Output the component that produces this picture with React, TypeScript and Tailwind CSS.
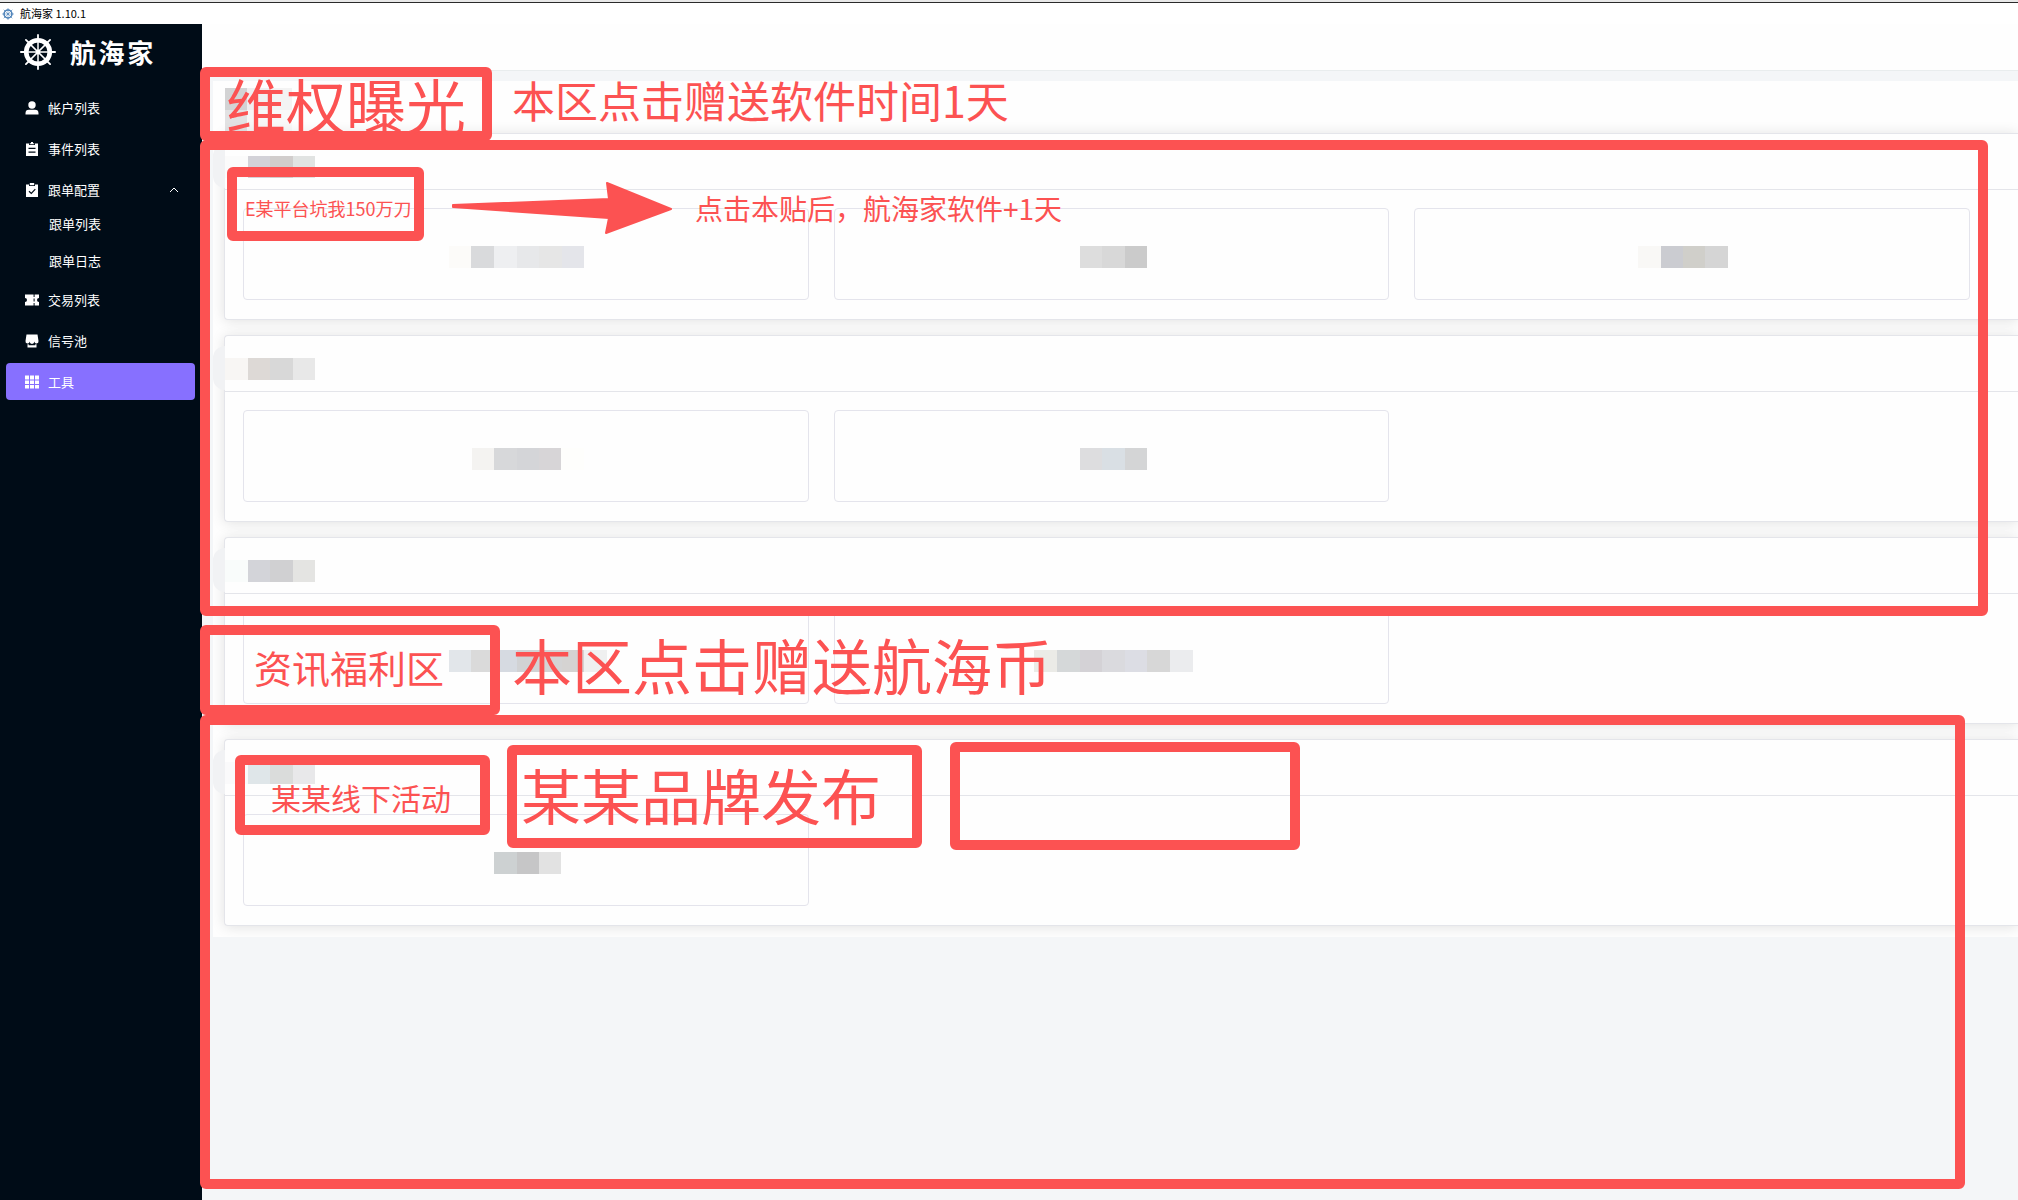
import type { ReactNode } from 'react'

function Helm({ className }: { className?: string }) {
  return (
    <svg viewBox="0 0 36 36" className={className} fill="none" stroke="currentColor" aria-hidden="true">
      <circle cx="18" cy="18" r="11.8" strokeWidth="4.6" />
      <circle cx="18" cy="18" r="2.4" fill="currentColor" stroke="none" />
      {[0, 45, 90, 135].map((a) => (
        <g key={a} transform={`rotate(${a} 18 18)`}>
          <path d="M18 4v28" strokeWidth="1.5" />
          <path d="M18 0.9v4M18 31.1v4" strokeWidth="1.8" strokeLinecap="round" />
        </g>
      ))}
    </svg>
  )
}

function Icon({ children }: { children: ReactNode }) {
  return (
    <svg viewBox="0 0 14 14" className="h-3.5 w-3.5 shrink-0" fill="currentColor" aria-hidden="true">
      {children}
    </svg>
  )
}

const icons = {
  user: (
    <Icon>
      <circle cx="7" cy="4" r="3.7" />
      <path d="M0.5 13.6v-1.4a3.4 3.4 0 0 1 3.4-3.4h6.2a3.4 3.4 0 0 1 3.4 3.4v1.4z" />
    </Icon>
  ),
  list: (
    <Icon>
      <path fillRule="evenodd" d="M1 1.5h3V3h6V1.5h3V14H1zM3.5 5.8v1.2h7V5.8zM3.5 9.5v1.2h7V9.5z" />
      <path d="M4.8 1.2H6V0h2v1.2h1.2v1H4.8z" />
    </Icon>
  ),
  checked: (
    <Icon>
      <path d="M1 1.5h3V3h6V1.5h3V14H1z" />
      <path d="M4.8 0h4.4v2.2H4.8z" />
      <path d="M4 8.2l2.3 2.2 4-4.2" fill="none" stroke="#000c17" strokeWidth="1.2" />
    </Icon>
  ),
  ticket: (
    <Icon>
      <path d="M0 1.5h8.6V4h1V1.5H14V5a2 2 0 0 0 0 4v3.500H9.600V10h-1v2.500H0V9a2 2 0 0 0 0-4zM8.600 5.500v3h1v-3z" fillRule="evenodd" />
    </Icon>
  ),
  pool: (
    <Icon>
      <path d="M1.5 0.5h11l1 6.5a2.1 2.1 0 0 1-4.2 0.6a2.3 2.3 0 0 1-4.6 0a2.1 2.1 0 0 1-4.2-0.6z" />
      <path d="M2.5 10.2h1.2v1h6.6v-1h1.2v3.3h-9z" />
    </Icon>
  ),
  grid: (
    <Icon>
      <path d="M0 0.5h4v4H0zM5 0.5h4v4H5zM10 0.5h4v4h-4zM0 5.5h4V9H0zM5 5.5h4V9H5zM10 5.5h4V9h-4zM0 10h4v3.5H0zM5 10h4v3.5H5zM10 10h4v3.5h-4z" />
    </Icon>
  ),
}

type MenuItem = { label: string; icon: ReactNode; active?: boolean; children?: string[] }

const menu: MenuItem[] = [
  { label: '帐户列表', icon: icons.user },
  { label: '事件列表', icon: icons.list },
  { label: '跟单配置', icon: icons.checked, children: ['跟单列表', '跟单日志'] },
  { label: '交易列表', icon: icons.ticket },
  { label: '信号池', icon: icons.pool },
  { label: '工具', icon: icons.grid, active: true },
]

// each string is one pixelated cell of a hidden label
type Cells = string[]
type Card = { title: Cells; tiles: Cells[] }

const cards: Card[] = [
  {
    title: ['bg-[#fbfbfb]', 'bg-[#d3d2d8]', 'bg-[#d1cdcc]', 'bg-[#e1e3e2]'],
    tiles: [
      ['bg-[#fcfbf9]', 'bg-[#d9dadc]', 'bg-[#eeeff1]', 'bg-[#e7e8ea]', 'bg-[#e6e6e6]', 'bg-[#e4e5ea]', 'bg-[#fefefe]'],
      ['bg-[#dddddd]', 'bg-[#d8d8d8]', 'bg-[#cbcbcb]'],
      ['bg-[#f9f8f6]', 'bg-[#cbccd1]', 'bg-[#d0cfca]', 'bg-[#d5d5d5]', 'bg-[#fefefe]'],
    ],
  },
  {
    title: ['bg-[#f8f6f4]', 'bg-[#ddd9d6]', 'bg-[#d8d8d8]', 'bg-[#e8e8e8]'],
    tiles: [
      ['bg-[#f4f3f1]', 'bg-[#d7d8da]', 'bg-[#d4d5d8]', 'bg-[#d7d5d7]', 'bg-[#fefefc]'],
      ['bg-[#dddddf]', 'bg-[#d9dfe4]', 'bg-[#d4d5d6]'],
    ],
  },
  {
    title: ['bg-[#f9fcfb]', 'bg-[#d3d4d9]', 'bg-[#d0d0d2]', 'bg-[#e4e4e2]'],
    tiles: [
      ['bg-[#e2e6ea]', 'bg-[#dadada]', 'bg-[#d6dae1]', 'bg-[#d1d2d4]', 'bg-[#d4d4d5]', 'bg-[#d5d3d2]', 'bg-[#eff0f0]'],
      ['bg-[#ebebe7]', 'bg-[#d5d8d9]', 'bg-[#d4d2d6]', 'bg-[#dadade]', 'bg-[#dcdde4]', 'bg-[#d7d7d7]', 'bg-[#ebecee]'],
    ],
  },
  {
    title: ['bg-[#fafafb]', 'bg-[#dfe6e9]', 'bg-[#dadcdb]', 'bg-[#e8e8ea]'],
    tiles: [['bg-[#cdd1d2]', 'bg-[#c6c6c7]', 'bg-[#e2e2e2]']],
  },
]

const stripWidths: Record<number, string> = {
  3: 'w-[67px]',
  4: 'w-[90px]',
  5: 'w-[112px]',
  7: 'w-[158px]',
}

function Mosaic({ cells }: { cells: Cells }) {
  return (
    <span className={`flex h-[22px] ${stripWidths[cells.length]}`}>
      {cells.map((cell, i) => (
        <span key={i} className={`flex-1 ${cell}`} />
      ))}
    </span>
  )
}

function Sidebar() {
  return (
    <aside className="w-[202px] shrink-0 bg-[#000c17] text-white">
      <div className="flex h-[65px] items-start gap-3.5 pt-2.5 pl-5">
        <Helm className="h-9 w-9" />
        <span className="text-[26px] leading-9 font-bold tracking-widest">航海家</span>
      </div>
      <nav className="mr-[7px] ml-1.5">
        <ul className="flex flex-col gap-1">
          {menu.map((item) => (
            <li key={item.label}>
              <a
                href="#"
                className={`flex h-[37px] items-center gap-[9px] rounded-sm pr-4 pl-[19px] text-[13px] ${item.active ? 'bg-[#8770ff]' : ''}`}
              >
                {item.icon}
                <span className="flex-1">{item.label}</span>
                {item.children && (
                  <svg viewBox="0 0 10 10" className="h-2.5 w-2.5" fill="none" stroke="currentColor" aria-hidden="true">
                    <path d="M1 7l4-4 4 4" />
                  </svg>
                )}
              </a>
              {item.children && (
                <ul className="flex flex-col gap-[7px] py-px">
                  {item.children.map((label) => (
                    <li key={label}>
                      <a href="#" className="flex h-[30px] items-center pl-[43px] text-[13px]">
                        {label}
                      </a>
                    </li>
                  ))}
                </ul>
              )}
            </li>
          ))}
        </ul>
      </nav>
    </aside>
  )
}

function ToolCard({ card }: { card: Card }) {
  return (
    <section className="rounded-l border border-r-0 border-[#e4e5ea] bg-[#fefefe] shadow-[0_1px_14px_rgba(0,0,0,0.12)]">
      <div className="flex h-14 items-start border-b border-[#e4e5ea] pt-[22px]">
        <span className="-mt-3 -ml-3 h-11 w-3 rounded-l-full bg-[#f1f2f4]" />
        <Mosaic cells={card.title} />
      </div>
      <div className="grid grid-cols-[566fr_556fr_556fr] gap-[25px] pt-[18px] pr-[48px] pb-[19px] pl-[18px]">
        {card.tiles.map((cells, i) => (
          <button
            key={i}
            type="button"
            aria-label="工具"
            className="flex h-[92px] items-start justify-center rounded border border-[#e4e4ec] pt-[37px] pl-1"
          >
            <Mosaic cells={cells} />
          </button>
        ))}
      </div>
    </section>
  )
}

function Frame({ className, children }: { className: string; children?: ReactNode }) {
  return (
    <div className={`absolute flex items-center rounded-md border-[10px] border-[#fc5252] leading-none whitespace-nowrap ${className}`}>
      {children}
    </div>
  )
}

// red markup drawn over the whole window
function Annotations() {
  return (
    <div className="pointer-events-none absolute inset-0 text-[#fc5252]">
      <Frame className="top-[67px] left-[200px] h-[74px] w-[292px] pl-4 text-[60px]">维权曝光</Frame>
      <p className="absolute top-[78px] left-[512px] text-[43px] leading-none whitespace-nowrap">本区点击赠送软件时间1天</p>

      <Frame className="top-[140px] right-[30px] left-[200px] h-[476px]" />
      <Frame className="top-[167px] left-[227px] h-[74px] w-[197px] pt-2 pl-2 text-[18px]">E某平台坑我150万刀</Frame>
      <svg viewBox="0 0 222 54" className="absolute top-[181px] left-[451px] h-[54px] w-[222px]" fill="currentColor" aria-hidden="true">
        <path
          d="M2 24L158 18L156 2L220 28L155 52L158 37L2 26z"
          stroke="currentColor"
          strokeWidth="2"
          strokeLinejoin="round"
        />
      </svg>
      <p className="absolute top-[194px] left-[695px] text-[28px] leading-none whitespace-nowrap">点击本贴后，航海家软件+1天</p>

      <Frame className="top-[625px] left-[200px] h-[90px] w-[300px] pb-1.5 pl-11 text-[38px]">资讯福利区</Frame>
      <p className="absolute top-[634px] left-[512px] text-[60px] leading-none whitespace-nowrap">本区点击赠送航海币</p>

      <Frame className="top-[715px] right-[53px] left-[200px] h-[474px]" />
      <Frame className="top-[755px] left-[235px] h-[80px] w-[255px] pt-1 pl-[26px] text-[30px]">某某线下活动</Frame>
      <Frame className="top-[745px] left-[507px] h-[103px] w-[415px] pb-1.5 pl-1 text-[60px]">某某品牌发布</Frame>
      <Frame className="top-[742px] left-[950px] h-[108px] w-[350px]" />
    </div>
  )
}

export default function App() {
  return (
    <div className="relative flex min-h-screen flex-col overflow-hidden bg-[#f4f6f8] font-['Noto_Sans_CJK_SC',sans-serif]">
      <div className="h-[3px] border-b border-[#2b2b2b] bg-[#e8e8e8]" />
      <header className="flex h-[21px] items-center bg-white pl-0.5 text-[11px] leading-none text-black">
        <Helm className="mr-1.5 h-3 w-3 text-[#4a80b8]" />
        航海家 1.10.1
      </header>
      <div className="flex flex-1">
        <Sidebar />
        <main className="min-w-0 flex-1">
          <div className="h-[47px] border-b border-[#e9edee] bg-[#fefefe]" />
          <div className="mt-2.5 ml-[11px] overflow-hidden bg-[#fefefe] pb-[11px] pl-[11px]">
            <div className="h-[52px] pt-[7px] pl-px">
              <Mosaic cells={['bg-[#d3d3d4]', 'bg-[#efeff0]', 'bg-[#f3f3f3]']} />
              <Mosaic cells={['bg-[#e2e2e3]', 'bg-[#f6f6f6]', 'bg-[#f9f9f9]']} />
            </div>
            <div className="flex flex-col gap-[15px]">
              {cards.map((card, i) => (
                <ToolCard key={i} card={card} />
              ))}
            </div>
          </div>
        </main>
      </div>
      <Annotations />
    </div>
  )
}
